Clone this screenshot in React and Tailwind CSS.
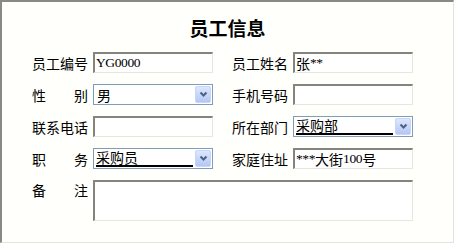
import React from "react";

const FONT = { fontFamily: '"Noto Sans CJK SC", "Liberation Sans", sans-serif' };
const SERIF = { fontFamily: '"Liberation Serif", serif' };

function Mixed({ text }) {
  const runs = [];
  let cur = "";
  let curAscii = null;
  for (const ch of text) {
    const a = ch.charCodeAt(0) < 128;
    if (curAscii === null || a === curAscii) {
      cur += ch;
    } else {
      runs.push([cur, curAscii]);
      cur = ch;
    }
    curAscii = a;
  }
  if (cur) runs.push([cur, curAscii]);
  return (
    <>
      {runs.map(([t, a], i) =>
        a ? (
          <span key={i} className="text-[13.5px] tracking-[-0.4px]" style={SERIF}>
            {t}
          </span>
        ) : (
          <span key={i} className="text-[14px]" style={FONT}>
            {t}
          </span>
        )
      )}
    </>
  );
}

function Label({ children, justify }) {
  if (justify) {
    return (
      <div className="w-[56px] flex justify-between text-[14px] leading-none text-black">
        {children.split("").map((c, i) => (
          <span key={i}>{c}</span>
        ))}
      </div>
    );
  }
  return <div className="w-[56px] text-[14px] leading-none text-black whitespace-nowrap">{children}</div>;
}

function TextBox({ value, w = "w-[120px]", h = "h-[21px]" }) {
  return (
    <div
      className={`${w} ${h} ml-[5px] bg-white border-t-2 border-l-2 border-r border-b border-t-[#84847c] border-l-[#84847c] border-r-[#e8e6de] border-b-[#e8e6de] flex items-center pl-[1px] leading-none text-black whitespace-nowrap overflow-hidden`}
    >
      <Mixed text={value} />
    </div>
  );
}

function Chevron() {
  return (
    <div className="w-[16px] my-[1px] mr-[1px] rounded-[2px] border border-[#c6d5f8] bg-gradient-to-b from-[#dde7fd] to-[#b4c7f3] flex items-center justify-center">
      <svg width="9" height="7" viewBox="0 0 9 7">
        <path d="M1.5 1.5 L4.5 4.5 L7.5 1.5" fill="none" stroke="#4d6185" strokeWidth="2" />
      </svg>
    </div>
  );
}

function Select({ value }) {
  return (
    <div className="w-[120px] h-[21px] ml-[5px] bg-white border border-[#7f9db9] flex items-stretch">
      <div className="flex-1 flex items-center pl-[2px] pr-[2px]">
        <span className="flex-1 text-[14px] leading-[15px] text-black border-b-2 border-black" style={FONT}>
          {value}
        </span>
      </div>
      <Chevron />
    </div>
  );
}

export default function App() {
  return (
    <div className="w-[455px] h-[245px] bg-white" style={FONT}>
      <div className="w-[454px] h-[243px] bg-[#fffffb] border-t-2 border-l-2 border-r border-b border-t-[#8a8a82] border-l-[#8a8a82] border-r-[#e4e2da] border-b-[#e4e2da]">
        <div className="h-[50px] flex items-center justify-center text-[19px] font-bold leading-none text-black">
          员工信息
        </div>
        <div className="flex flex-col gap-[11px]">
          <div className="flex items-center h-[21px] pl-[30px]">
            <Label>员工编号</Label>
            <TextBox value="YG0000" />
            <div className="w-[19px]" />
            <Label>员工姓名</Label>
            <TextBox value="张**" />
          </div>
          <div className="flex items-center h-[21px] pl-[30px]">
            <Label justify>性别</Label>
            <div className="w-[120px] h-[21px] ml-[5px] bg-white border border-[#7f9db9] flex items-stretch">
              <div className="flex-1 flex items-center pl-[3px] text-[14px] leading-none">男</div>
              <Chevron />
            </div>
            <div className="w-[19px]" />
            <Label>手机号码</Label>
            <TextBox value="" />
          </div>
          <div className="flex items-center h-[21px] pl-[30px]">
            <Label>联系电话</Label>
            <TextBox value="" />
            <div className="w-[19px]" />
            <Label>所在部门</Label>
            <Select value="采购部" />
          </div>
          <div className="flex items-center h-[21px] pl-[30px]">
            <Label justify>职务</Label>
            <Select value="采购员" />
            <div className="w-[19px]" />
            <Label>家庭住址</Label>
            <TextBox value="***大街100号" />
          </div>
          <div className="flex items-start pl-[30px]">
            <div className="pt-[3px]">
              <Label justify>备注</Label>
            </div>
            <TextBox value="" w="w-[320px]" h="h-[41px]" />
          </div>
        </div>
      </div>
    </div>
  );
}
